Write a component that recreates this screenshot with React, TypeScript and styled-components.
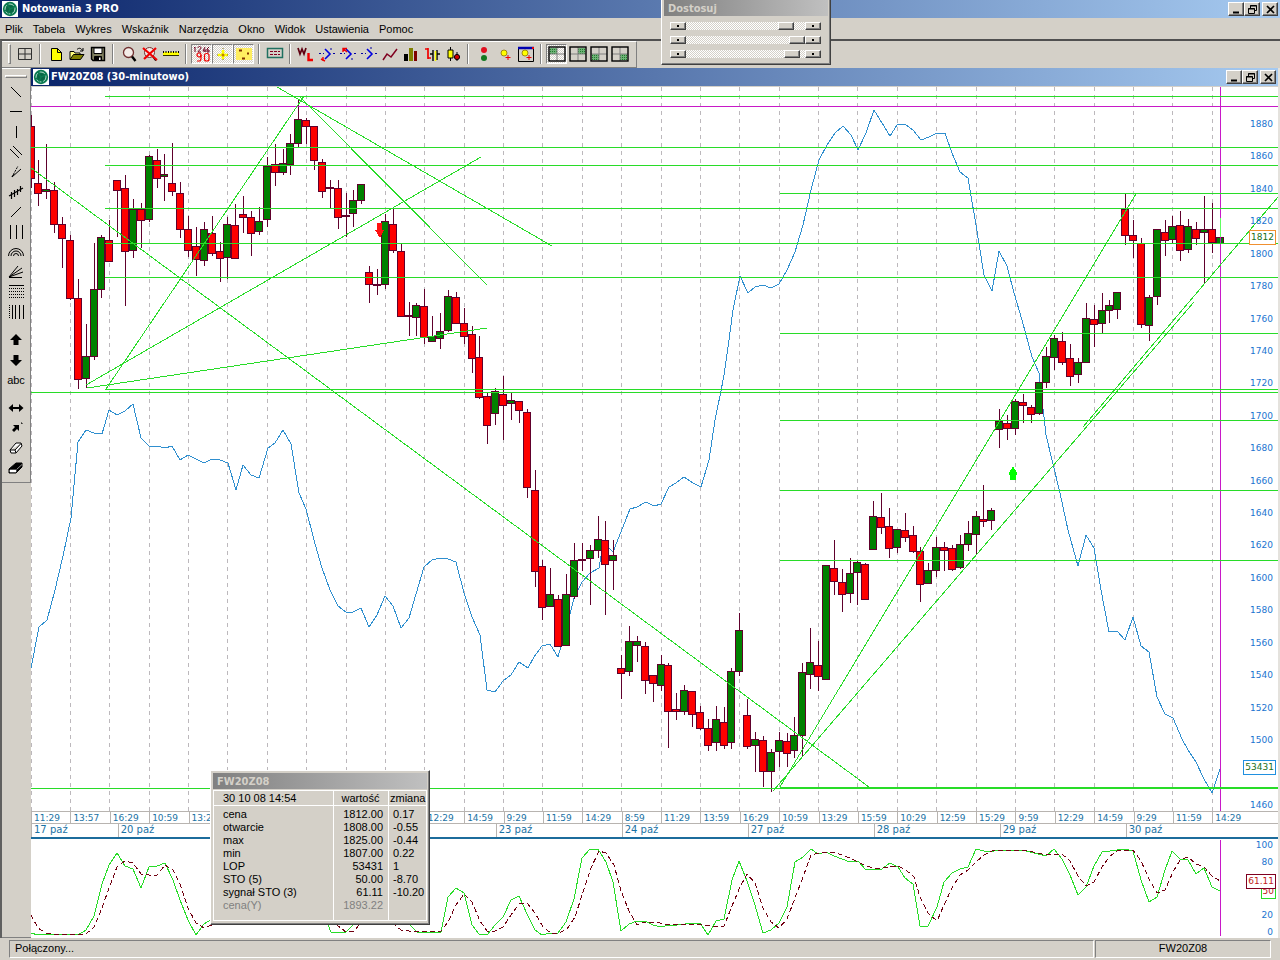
import React from "react";
import styled, { createGlobalStyle, css } from "styled-components";

const face = "#d4d0c8";
const shade = "#808080";
const uiFont = '"Liberation Sans", Arial, sans-serif';
const titleFont = '"DejaVu Sans Condensed", "DejaVu Sans", sans-serif';
const axisFont = '"DejaVu Sans", Verdana, sans-serif';

const GlobalStyle = createGlobalStyle`
  * { box-sizing: border-box; }
  body { margin: 0; background: ${face}; }
`;

const raised = css`
  border: 1px solid;
  border-color: #ffffff #404040 #404040 #ffffff;
  box-shadow: inset -1px -1px 0 ${shade};
`;

const checker = css`
  background: repeating-conic-gradient(#ffffff 0 25%, ${face} 0 50%) 0 0 / 2px 2px;
`;

/* ---------- frame ---------- */

const AppFrame = styled.div`
  height: 100vh;
  min-height: 600px;
  display: flex;
  flex-direction: column;
  background: ${face};
  color: #000;
  font: 11px/13px ${uiFont};
  position: relative;
  overflow: hidden;
`;

const TitleBar = styled.header<{ $inner?: boolean }>`
  flex: none;
  height: ${(p) => (p.$inner ? 19 : 18)}px;
  display: flex;
  align-items: center;
  gap: ${(p) => (p.$inner ? 2 : 4)}px;
  padding: 0 2px;
  border-bottom: ${(p) => (p.$inner ? 1 : 0)}px solid ${face};
  background: linear-gradient(90deg, #0a246a, #a6caf0) border-box;
`;

const TitleText = styled.h1`
  margin: 0;
  flex: 1;
  color: #fff;
  font: bold 11px/16px ${titleFont};
  white-space: nowrap;
`;

const CaptionButtons = styled.div`
  display: flex;
`;

const CaptionButton = styled.button<{ $apart?: boolean }>`
  width: 16px;
  height: 14px;
  padding: 0;
  display: grid;
  place-items: center;
  background: ${face};
  margin-left: ${(p) => (p.$apart ? 2 : 0)}px;
  ${raised}
`;

const MenuBar = styled.nav`
  flex: none;
  height: 21px;
  display: flex;
  align-items: center;
`;

const MenuItem = styled.button`
  border: 0;
  background: none;
  padding: 0 5px;
  height: 20px;
  font: 11px/20px ${uiFont};
  color: #000;
`;

const Workspace = styled.main`
  flex: 1;
  min-height: 0;
  display: flex;
  flex-direction: column;
  border-top: 2px solid #505050;
  border-left: 2px solid #606060;
`;

const ToolStrip = styled.div`
  flex: none;
  align-self: flex-start;
  height: 27px;
  display: flex;
  align-items: center;
  padding: 0 6px 2px;
  border-top: 1px solid #fff;
  border-right: 1px solid ${shade};
  border-bottom: 1px solid ${shade};
`;

const Grip = styled.span<{ $flat?: boolean }>`
  width: ${(p) => (p.$flat ? 22 : 3)}px;
  height: ${(p) => (p.$flat ? 3 : 20)}px;
  border: 1px solid;
  border-color: #fff ${shade} ${shade} #fff;
  margin: ${(p) => (p.$flat ? "6px 0 4px" : "0 3px 0 0")};
`;

const Divider = styled.span`
  width: 2px;
  height: 20px;
  margin: 0 4px;
  border-left: 1px solid ${shade};
  border-right: 1px solid #fff;
`;

const ToolButton = styled.button<{ $pressed?: boolean }>`
  width: 21px;
  height: 20px;
  padding: 0;
  display: grid;
  place-items: center;
  border: 1px solid transparent;
  background: none;
  ${(p) =>
    p.$pressed &&
    css`
      ${checker}
      border-color: ${shade} #fff #fff ${shade};
    `}
`;

const Body = styled.div`
  flex: 1;
  min-height: 0;
  display: flex;
`;

const SideColumn = styled.aside`
  flex: none;
  width: 29px;
  border-bottom: 1px solid ${shade};
`;

const SideStrip = styled.div`
  display: flex;
  flex-direction: column;
  align-items: center;
  padding-bottom: 4px;
  border-top: 1px solid #fff;
  border-right: 1px solid ${shade};
  border-bottom: 1px solid ${shade};
`;

const SideGap = styled.span`
  height: 8px;
`;

const SideButton = styled.button`
  width: 24px;
  height: 20px;
  padding: 0;
  border: 0;
  background: none;
  display: grid;
  place-items: center;
  font: 11px/16px ${uiFont};
  color: #000;
`;

const ChartWindow = styled.section`
  flex: 1;
  min-width: 0;
  display: flex;
  flex-direction: column;
  background: #fff;
  border-right: 2px solid #e4e2dd;
`;

/* ---------- chart ---------- */

const PricePane = styled.div`
  position: relative;
  flex: 724 1 0;
  min-height: 0;
`;

const StochPane = styled.div`
  position: relative;
  flex: 99 1 0;
  min-height: 0;
`;

const Plot = styled.svg`
  display: block;
  width: 100%;
  height: 100%;
  shape-rendering: crispEdges;
`;

const Scale = styled.ol<{ $top: number }>`
  position: absolute;
  top: ${(p) => p.$top}px;
  bottom: 0;
  right: 5px;
  margin: 0;
  padding: 0;
  list-style: none;
  display: flex;
  flex-direction: column;
  justify-content: space-between;
  text-align: right;
  font: 9px/12px ${axisFont};
  color: #1a74d0;
`;

const ScaleMark = styled.li`
  height: 12px;
`;

const Tag = styled.output<{ $top: string; $edge: string; $ink: string }>`
  position: absolute;
  right: 2px;
  top: ${(p) => p.$top};
  height: 15px;
  padding: 0 1px;
  border: 1px solid ${(p) => p.$edge};
  background: #fff;
  color: ${(p) => p.$ink};
  font: 9px/13px ${axisFont};
`;

const AxisRow = styled.ol<{ $dates?: boolean }>`
  flex: none;
  height: ${(p) => (p.$dates ? 14 : 12)}px;
  margin: 0;
  padding: 0;
  list-style: none;
  display: flex;
  overflow: hidden;
  border-top: 1px solid #b8b4b0;
  font: ${(p) => (p.$dates ? 10 : 9)}px/12px ${axisFont};
  color: #1a72a4;
`;

const AxisCell = styled.li<{ $bars: number }>`
  flex: none;
  width: calc(100% * ${(p) => p.$bars} * 63 / 9976);
  padding-left: 2px;
  border-left: 1px solid #b8b4b0;
  white-space: nowrap;
`;

const PaneRule = styled.hr`
  flex: none;
  width: 100%;
  height: 2px;
  margin: 0;
  border: 0;
  background: #1c6c9c;
`;

/* ---------- floating windows ---------- */

const Palette = styled.section`
  position: absolute;
  background: ${face};
  ${raised}
`;

const SliderPalette = styled(Palette)`
  left: 661px;
  top: -3px;
  width: 170px;
  padding: 2px 2px 6px;
`;

const DataPalette = styled(Palette)`
  left: 210px;
  bottom: 35px;
  width: 220px;
  padding: 2px 2px 3px;
`;

const PaletteTitle = styled.h2`
  margin: 0;
  height: 16px;
  padding-left: 4px;
  font: bold 11px/18px ${titleFont};
  color: ${face};
  background: linear-gradient(90deg, #808080, #c0c0c0);
`;

const SliderRow = styled.div`
  display: flex;
  height: 8px;
  margin: 6px 7px 0 6px;
`;

const StepButton = styled.button`
  width: 16px;
  height: 8px;
  padding: 0;
  background: radial-gradient(circle, #000 0 1px, ${face} 1px);
  ${raised}
`;

const Slider = styled.input`
  flex: 1;
  min-width: 0;
  height: 8px;
  margin: 0;
  appearance: none;
  ${checker}
  &::-webkit-slider-thumb {
    appearance: none;
    width: 16px;
    height: 8px;
    background: ${face};
    ${raised}
  }
`;

const DataTable = styled.table`
  width: 100%;
  margin-top: 1px;
  table-layout: fixed;
  border-collapse: separate;
  border-spacing: 0;
  border: 1px solid #fff;
  font: 11px/13px ${uiFont};
`;

const HeadCell = styled.th<{ $width?: number }>`
  width: ${(p) => (p.$width ? `${p.$width}px` : "auto")};
  height: 15px;
  padding: 0 2px 0 1px;
  font-weight: normal;
  text-align: center;
  white-space: nowrap;
  border-bottom: 1px solid #fff;
  border-left: 1px solid #fff;
  &:first-child {
    border-left: 0;
    padding-left: 9px;
    text-align: left;
  }
`;

const NameCell = styled.th`
  height: 13px;
  padding: 0 0 0 9px;
  font-weight: normal;
  text-align: left;
`;

const ValueCell = styled.td`
  padding: 0 5px 0 0;
  text-align: right;
  border-left: 1px solid #fff;
`;

const ChangeCell = styled.td`
  padding: 0 0 0 4px;
  overflow: hidden;
  white-space: nowrap;
  border-left: 1px solid #fff;
`;

const DataRow = styled.tr<{ $muted?: boolean }>`
  color: ${(p) => (p.$muted ? shade : "#000")};
`;

const SpacerRow = styled.tr<{ $height: number }>`
  height: ${(p) => p.$height}px;
`;

/* ---------- status bar ---------- */

const StatusBar = styled.footer`
  flex: none;
  height: 22px;
  display: flex;
  gap: 1px;
  padding: 2px 9px;
`;

const StatusPane = styled.div<{ $fixed?: boolean }>`
  flex: ${(p) => (p.$fixed ? "0 0 176px" : "1")};
  padding-left: ${(p) => (p.$fixed ? 0 : 5)}px;
  text-align: ${(p) => (p.$fixed ? "center" : "left")};
  line-height: 15px;
  border: 1px solid;
  border-color: ${shade} #fff #fff ${shade};
`;

/* ---------- icons ---------- */

const Icon = ({ children, w = 18, h = 16 }: { children: React.ReactNode; w?: number; h?: number }) => (
  <svg width={w} height={h} viewBox={`0 0 ${w} ${h}`} fill="none" stroke="#000" aria-hidden="true">
    {children}
  </svg>
);

const Logo = () => (
  <svg width="16" height="16" viewBox="0 0 16 16" aria-hidden="true">
    <rect width="16" height="16" fill="#fff" />
    <circle cx="8" cy="8" r="7.2" fill="#0b7a50" />
    <circle cx="8" cy="8" r="5" fill="none" stroke="#d8ece2" strokeWidth=".8" strokeDasharray="5.4 1.8" />
    <circle cx="8" cy="8" r="3.8" fill="#0a6644" />
    <path d="M8 8L5 3.6M8 8L12.5 6M8 8L6 12.6" stroke="#0b7a50" strokeWidth="1.4" />
  </svg>
);

const captionIcons: Record<string, React.ReactNode> = {
  Minimalizuj: <path d="M2 8.5H8" strokeWidth="2" />,
  Przywróć: <path d="M3.5 4V1.5H9.5V6.5H8M3 2H10M1.5 4.5H7.5V9.5H1.5ZM1 5H8" />,
  Zamknij: <path d="M2 2L9 9M9 2L2 9" strokeWidth="1.7" />,
};

const Caption = () => (
  <CaptionButtons>
    {Object.keys(captionIcons).map((name) => (
      <CaptionButton key={name} type="button" aria-label={name} $apart={name === "Zamknij"}>
        <Icon w={11} h={11}>{captionIcons[name]}</Icon>
      </CaptionButton>
    ))}
  </CaptionButtons>
);

const chevron = <path d="M7 3L12 8L7 13" stroke="#0000e0" strokeWidth="1.6" />;
const bulb = (x: number, y: number) => (
  <>
    <circle cx={x} cy={y} r="3" fill="#ffff00" stroke="#806000" strokeWidth=".7" />
    <path d={`M${x + 1.5} ${y + 4.5}h5M${x + 4} ${y + 2}v5`} stroke="#f00000" />
  </>
);
const quadrant = (x: number, y: number) => (
  <Icon>
    <path d={`M${x} ${y}h7v6h-7z`} fill="#6fb277" stroke="none" />
    <path d={`M${x} ${y + 1.5}h7M${x} ${y + 3.5}h7M${x} ${y + 5.5}h7`} stroke="#1f7a2c" strokeDasharray="1 1" />
    <path d="M9 1V15M1 8H17" stroke="#808080" />
    <rect x="1" y="1" width="16" height="14" strokeWidth="1.4" />
  </Icon>
);

type Tool = { name: string; icon: React.ReactNode; pressed?: boolean };

const toolGroups: Tool[][] = [
  [{ name: "Siatka", icon: <Icon><path d="M2.5 2.5H15.5V13.5H2.5ZM9 2V14M2 8H16" stroke="#303030" /></Icon> }],
  [
    { name: "Nowy", icon: <Icon><path d="M4.5 2.5H10.5L14.5 6.5V14.5H4.5Z" fill="#ffff00" /><path d="M10.5 2.5V6.5H14.5" /></Icon> },
    { name: "Otwórz", icon: <Icon><path d="M2 13V5.5H6L7 7H12V9" fill="#ffff80" /><path d="M2 13.5L5.5 8.5H16L12.5 13.5Z" fill="#808000" /><path d="M9 3.5C11 1.5 13 2 14.5 4.5M15 2V5H12" /></Icon> },
    { name: "Zapisz", icon: <Icon><path d="M2.5 1.5H15.5V14.5H4L2.5 13Z" fill="#808060" strokeWidth="1.4" /><path d="M5 2H13V7.5H5Z" fill="#fff" /><path d="M5.5 10.5H12.5V14.5H5.5Z" fill="#000" /><path d="M10 11.5H11.5V14H10Z" fill="#fff" stroke="none" /></Icon> },
  ],
  [
    { name: "Powiększ", icon: <Icon><circle cx="8.5" cy="6.5" r="5" fill="#f4ece8" stroke="#703030" strokeWidth="1.3" /><path d="M12 10.5L15.5 15" strokeWidth="2.4" /></Icon> },
    { name: "Anuluj powiększenie", icon: <Icon><circle cx="8.5" cy="6.5" r="5" fill="#f4ece8" stroke="#703030" /><path d="M12 10.5L15 14.5" strokeWidth="2" /><path d="M2 2L16 14M15 2L3 13" stroke="#f00000" strokeWidth="2.2" /></Icon> },
    { name: "Linijka", icon: <Icon><path d="M1 7.5H17" stroke="#ffff00" strokeWidth="3" /><path d="M1 9.5H17" stroke="#303000" /><path d="M1 6H17" strokeDasharray="1 1.5" strokeWidth="2" /></Icon> },
  ],
  [
    { name: "Wartości", pressed: true, icon: <Icon><path d="M2 1V6M1 2L2 1M5 2C5 0 8 0 8 2C8 3 5 5 5 6H8M12 1L10 5H13M12 3V6M16 1L14 3V6H16V4H14" stroke="#700020" /><circle cx="6" cy="9" r="2" stroke="#f00000" strokeWidth="1.2" /><path d="M8 9V13L7 15H4" stroke="#f00000" strokeWidth="1.2" /><rect x="11.5" y="7.5" width="4.5" height="7.5" rx="2" stroke="#f00000" strokeWidth="1.2" /></Icon> },
    { name: "Krzyż", pressed: true, icon: <Icon><path d="M9 4V13M4 9H14" stroke="#ffff00" strokeWidth="2.6" /><path d="M9 2V4M9 13V15M3 9H5M13 9H15" stroke="#807000" strokeDasharray="1 1" /><circle cx="9" cy="9" r="1.5" fill="#c08000" stroke="none" /></Icon> },
    { name: "Punkty", pressed: true, icon: <Icon><path d="M1 2H17V14H1Z" fill="#ffee60" stroke="none" /><path d="M4 4.5H7M12 7.5H14M7 12.5H10" stroke="#803000" strokeWidth="2.2" /></Icon> },
  ],
  [{ name: "Legenda", icon: <Icon><path d="M1.5 2.5H16.5V11.5H1.5Z" stroke="#207060" strokeWidth="1.5" /><path d="M4 5.5H14M4 8.5H14" stroke="#800020" strokeDasharray="3 1" /></Icon> }],
  [
    { name: "Wskaźnik WL", icon: <Icon><path d="M1 2L3 8L5 3L7 8L9 2" stroke="#600010" strokeWidth="1.7" /><path d="M11.5 7V14H16" stroke="#f00000" strokeWidth="2.4" /></Icon> },
    { name: "Sygnał", icon: <Icon><path d="M1 7.5H6M13 2V4M15 7.5H18" stroke="#0000a0" strokeDasharray="2 2" />{chevron}<path d="M3 13L7 15M5 11V15" stroke="#f00000" strokeWidth="1.4" /></Icon> },
    { name: "Sygnał wstecz", icon: <Icon><path d="M1 7.5H6M15 7.5H18M13 12V15" stroke="#0000a0" strokeDasharray="2 2" />{chevron}<path d="M4 6V2.5H8M4 2.5L8 6" stroke="#f00000" strokeWidth="1.4" /></Icon> },
    { name: "Sygnał dalej", icon: <Icon><path d="M1 7.5H6M15 7.5H18M11 1V3" stroke="#0000a0" strokeDasharray="2 2" />{chevron}</Icon> },
    { name: "Wykres liniowy", icon: <Icon><path d="M2 14L6 8L10 11L16 3" stroke="#800020" strokeWidth="1.5" /></Icon> },
    { name: "Wykres słupkowy", icon: <Icon><path d="M2 8H6V15H2Z" fill="#000" stroke="none" /><path d="M7 2H11V15H7Z" fill="#808000" stroke="none" /><path d="M12 5H15V15H12Z" fill="#800000" stroke="none" /></Icon> },
    { name: "Wykres OHLC", icon: <Icon><path d="M5 2V13M2 3H5M5 12H8" stroke="#f00000" strokeWidth="1.7" /><path d="M10 4V15M10 8H7M14 4V14M14 8H17" strokeWidth="1.4" /><path d="M12.5 5V15" stroke="#ffff00" strokeWidth="1.5" /></Icon> },
    { name: "Wykres świecowy", icon: <Icon><path d="M6.5 1V15" /><path d="M4 4H9V12H4Z" fill="#ffff00" /><path d="M13 6V15" /><circle cx="13" cy="11" r="2.6" fill="#d00000" /></Icon> },
  ],
  [
    { name: "Światła", icon: <Icon><circle cx="9" cy="4" r="3" fill="#e01020" stroke="none" /><circle cx="9" cy="12" r="3" fill="#107820" stroke="none" /></Icon> },
    { name: "Nowy alarm", icon: <Icon>{bulb(8, 7)}</Icon> },
    { name: "Lista alarmów", icon: <Icon><path d="M1.5 2V15.5H16.5V2" /><path d="M1 2H17" stroke="#0000b0" strokeWidth="2.5" /><path d="M15 2H17" stroke="#f00000" strokeWidth="2" />{bulb(8, 7)}</Icon> },
  ],
  [
    { name: "Lewy górny", pressed: true, icon: quadrant(2, 2) },
    { name: "Prawy górny", icon: quadrant(9, 2) },
    { name: "Lewy dolny", icon: quadrant(2, 8) },
    { name: "Prawy dolny", icon: quadrant(9, 8) },
  ],
];

const sideGroups: Tool[][] = [
  [
    { name: "Linia", icon: <Icon><path d="M4 3L14 13" /></Icon> },
    { name: "Linia pozioma", icon: <Icon><path d="M3 7.5H15" /></Icon> },
    { name: "Linia pionowa", icon: <Icon><path d="M9.5 2V14" /></Icon> },
    { name: "Kanał", icon: <Icon><path d="M3 5L12 14M6 2L15 11" /></Icon> },
    { name: "Wachlarz", icon: <Icon><path d="M5 13L14 5M5 13L7 10" /><path d="M5 13L11 2" strokeDasharray="2 1" /></Icon> },
    { name: "Regresja", icon: <Icon><path d="M2 12L16 4M4.5 8V15M7.500 6V13M10.5 5V11M13.5 2V8" strokeWidth="1.2" /></Icon> },
    { name: "Odcinek", icon: <Icon><path d="M4 13L14 3" /></Icon> },
    { name: "Cykle", icon: <Icon><path d="M3.5 1V15M9.5 1V15M15.5 1V15" /></Icon> },
    { name: "Łuki", icon: <Icon><path d="M1.5 12A7.5 7.5 0 0 1 16.5 12M4 12A5 5 0 0 1 14 12M6.5 12A2.5 2.5 0 0 1 11.5 12" /></Icon> },
    { name: "Promienie", icon: <Icon><path d="M2 13L11 2M2 13L15 4M2 13L16 8M2 13.5H15" /></Icon> },
    { name: "Poziomy", icon: <Icon><path d="M2 1.5H17" /><path d="M2 4.5H17M2 7.5H17M2 10.5H17M2 13.5H17" strokeDasharray="1 1" /></Icon> },
    { name: "Strefy", icon: <Icon><path d="M2.5 1V15" strokeDasharray="1 1" /><path d="M5.5 1V15M8.5 1V15M12.5 1V15M16.5 1V15" /></Icon> },
  ],
  [
    { name: "Strzałka w górę", icon: <Icon><path d="M9 2L15 8H11.5V13H6.5V8H3Z" fill="#000" stroke="none" /></Icon> },
    { name: "Strzałka w dół", icon: <Icon><path d="M9 14L15 8H11.5V3H6.5V8H3Z" fill="#000" stroke="none" /></Icon> },
    { name: "Tekst", icon: "abc" },
  ],
  [
    { name: "Przesuń", icon: <Icon><path d="M1.5 8L6 4V12ZM16.5 8L12 4V12Z" fill="#000" stroke="none" /><path d="M4 8H14" strokeWidth="2" /></Icon> },
    { name: "Skaluj", icon: <Icon><path d="M6 5H12V11L10 9L7 12L5 10L8 7Z" fill="#000" stroke="none" /><path d="M14 3H15V4" /></Icon> },
    { name: "Gumka", icon: <Icon><path d="M3 10L9 3H14L15 6L9 13H4ZM3 10H8L14 3.5M8 10L9 13" fill="#fff" /></Icon> },
    { name: "Usuń wszystko", icon: <Icon><path d="M2 9L9 3H15V7L9 13H2Z" fill="#000" /><path d="M3 10H9V12H3ZM9.5 9.5L15 4.5" fill="#fff" stroke="#fff" strokeWidth=".6" /></Icon> },
  ],
];

/* ---------- chart data ---------- */

const X0 = 31;
const STEP = 7.875;
const barX = (i: number) => Math.floor(X0 + i * STEP);

// body top, body bottom, high, low; the sign of the first value gives the direction (negative = falling)
const candles: number[][] = [
  [-126,179,115,188],[-183,194,160,206],[189,192,144,199],[-190,225,182,233],[-224,239,217,268],[-240,299,235,300],[-298,380,279,389],[356,379,324,388],
  [289,357,243,360],[237,290,235,298],[-240,262,220,262],[-180,191,180,237],[-188,252,175,306],[209,251,199,258],[-209,221,203,248],[156,220,155,222],
  [-160,179,149,188],[174,177,154,201],[-183,192,143,196],[-193,230,182,238],[-229,251,216,257],[-246,260,227,276],[229,261,222,266],[-233,254,216,256],
  [-251,259,242,282],[224,258,217,279],[-225,259,204,259],[-214,218,196,233],[-217,234,211,256],[221,232,207,235],[166,220,157,227],[-164,173,144,186],
  [163,173,149,175],[143,165,134,175],[119,144,99,147],[-120,127,118,144],[-126,161,126,170],[-162,192,159,198],[187,188,180,208],[-188,218,180,229],
  [-215,217,193,237],[200,214,190,227],[184,201,184,204],[-272,285,266,303],[-284,286,269,295],[221,285,214,289],[-224,251,208,253],[-251,317,244,317],
  [315,316,302,336],[305,318,303,336],[-306,338,289,344],[336,342,316,342],[331,339,313,349],[296,331,290,332],[-297,324,292,324],[-323,337,308,344],
  [-334,359,326,373],[-357,398,336,399],[-396,426,393,444],[391,414,388,425],[-394,406,376,440],[400,404,393,420],[-401,411,401,423],[-412,488,409,498],
  [-490,572,470,587],[-566,608,560,620],[594,607,568,607],[-599,647,595,647],[594,646,574,646],[560,597,543,599],[-559,561,543,571],[550,559,545,605],
  [539,551,516,558],[-540,565,521,615],[555,561,540,590],[-668,674,655,699],[641,672,626,676],[641,646,636,662],[-646,681,642,694],[-675,684,675,702],
  [664,686,655,691],[-665,712,663,748],[-709,712,693,720],[690,712,685,715],[-691,715,691,727],[-712,729,706,730],[-728,746,719,751],[719,743,706,751],
  [-722,746,707,749],[671,743,668,749],[630,672,613,676],[-715,747,699,749],[739,746,732,772],[-740,772,736,787],[752,772,749,792],[740,752,732,767],
  [-741,754,733,767],[735,751,717,758],[672,736,663,756],[662,675,628,689],[-665,677,641,691],[565,680,565,680],[-568,582,540,595],[-582,595,569,612],
  [573,594,558,603],[562,573,560,605],[-564,600,563,600],[516,550,501,550],[-517,528,493,534],[-526,549,508,558],[529,548,529,553],[-530,538,513,542],
  [-535,552,526,553],[-551,585,547,602],[570,584,563,584],[547,571,537,577],[-547,551,542,571],[-548,570,545,571],[544,568,535,569],[533,545,521,551],
  [516,535,511,555],[-519,522,485,527],[510,521,508,530],[421,430,409,448],[-423,429,415,440],[401,429,399,435],[-402,406,394,423],[-407,415,405,423],
  [382,414,382,415],[356,383,347,388],[338,358,335,370],[-341,363,332,365],[-358,377,344,386],[362,375,358,383],[318,363,303,363],[-319,325,305,347],
  [310,324,293,333],[305,311,300,323],[292,310,292,319],[-209,236,194,245],[-235,241,220,258],[-243,325,238,328],[297,326,295,341],[229,297,229,305],
  [-232,241,220,256],[226,240,216,243],[-225,251,211,261],[226,250,219,253],[-229,239,222,245],[229,233,196,283],[-229,243,203,253],[237,244,237,244],
];

const openInterest =
  "31,668 39,627 47,620 55,590 63,556 71,518 78,442 86,430 94,433 102,434 109,410 117,415 125,411 133,404 141,438 149,446 157,446 165,448 172,446 180,460 188,455 196,459 204,463 212,459 220,460 228,463 236,490 243,465 251,475 259,478 268,448 275,443 283,430 291,444 299,493 306,509 314,540 322,568 330,590 338,606 346,612 353,612 361,608 369,627 377,615 385,596 393,606 401,628 409,618 416,594 424,567 432,560 440,558 448,559 456,562 464,593 472,617 480,635 487,690 495,692 503,681 511,675 519,662 528,668 534,657 542,646 550,644 558,657 570,614 574,598 579,588 582,582 590,573 599,568 601,556 606,545 613,552 630,509 637,507 646,502 654,506 661,504 669,487 676,483 684,477 693,483 701,487 709,460 715,420 721,391 724,375 729,340 733,310 740,276 748,293 755,287 763,285 771,288 779,284 787,270 795,252 803,225 811,190 819,160 827,145 835,133 843,126 851,135 858,150 866,133 874,110 882,123 890,136 897,125 905,124 913,130 921,140 929,137 937,133 945,133 952,153 960,172 968,178 976,225 984,275 992,291 999,251 1007,266 1014,293 1022,320 1032,357 1039,373 1046,435 1052,460 1060,493 1068,530 1078,566 1086,535 1094,548 1101,590 1109,632 1117,631 1125,640 1133,617 1141,646 1149,652 1157,697 1165,714 1173,718 1182,739 1188,750 1196,762 1204,779 1212,793 1220,769";

const stochastic =
  "31,933 38,935 46,934 78,935 86,930 94,916 102,884 109,865 117,853 125,866 133,869 141,888 149,867 157,866 165,863 173,880 180,900 188,920 196,935 204,924 212,919 240,890 300,880 328,925 331,932 346,932 354,924 375,880 400,890 410,925 417,932 433,932 441,932 448,897 456,888 464,893 472,925 479,934 487,935 495,925 503,917 511,900 519,896 527,914 535,930 542,935 550,933 558,933 566,922 574,899 582,858 590,849 598,849 606,862 613,882 621,931 629,924 637,921 645,921 653,925 661,927 669,925 677,925 685,924 700,923 708,935 716,921 724,919 732,880 739,861 747,881 755,905 763,933 771,930 779,923 787,907 795,862 803,857 811,849 818,854 826,852 834,856 842,859 850,862 858,861 866,870 874,869 882,869 890,863 898,867 905,878 913,884 920,926 928,926 937,907 944,882 952,873 960,869 968,867 976,849 984,851 994,851 1022,850 1046,856 1054,849 1062,859 1070,875 1078,895 1086,887 1094,866 1102,852 1110,851 1117,850 1125,849 1133,851 1141,880 1149,902 1157,897 1165,870 1172,851 1180,859 1188,860 1196,874 1204,868 1212,887 1220,891";

const stochasticSignal =
  "31,915 38,928 46,933 54,934 86,934 94,927 102,908 109,888 117,867 125,861 133,863 141,874 149,875 157,875 165,865 173,870 180,884 188,908 196,923 204,928 212,925 250,890 310,890 338,926 346,932 354,931 360,924 380,890 395,925 401,930 409,931 433,931 441,931 448,922 456,905 464,894 472,902 480,921 487,931 495,931 503,927 511,915 519,904 527,903 535,913 543,927 551,933 559,933 567,929 575,917 583,892 591,868 599,851 606,853 614,865 621,891 629,911 637,925 645,922 655,922 669,925 700,924 710,926 724,926 732,906 740,887 747,874 755,883 763,908 771,922 779,928 787,919 795,898 803,877 811,855 819,853 834,852 842,855 850,858 858,862 866,866 874,868 882,868 898,866 906,870 914,877 920,897 928,913 937,921 944,905 952,888 960,875 968,870 976,862 984,855 992,851 1024,850 1046,855 1062,854 1070,861 1078,876 1086,886 1094,882 1102,867 1110,856 1117,851 1133,850 1141,861 1149,879 1157,893 1165,890 1173,872 1180,860 1188,857 1196,864 1204,867 1212,876 1220,881";

const levels: [number, number][] = [
  [96, 105], [147, 31], [165, 105], [193, 780], [208, 105], [243, 105], [277, 105], [333, 780],
  [389, 105], [392, 31], [420, 780], [490, 780], [560, 780], [788, 31], [787, 780],
];

const trendLines: [number, number, number, number][] = [
  [31, 168, 869, 787], [106, 389, 304, 96], [86, 385, 481, 157], [87, 388, 487, 328], [277, 87, 552, 246],
  [300, 97, 487, 285], [780, 787, 1136, 194], [773, 791, 1194, 302], [1083, 427, 1278, 197],
];

const times = [
  "11:29", "13:57", "16:29", "10:59", "13:29", "", "", "", "", "", "12:29", "14:59", "9:29", "11:59", "14:29", "8:59",
  "11:29", "13:59", "16:29", "10:59", "13:29", "15:59", "10:29", "12:59", "15:29", "9:59", "12:29", "14:59", "9:29", "11:59", "14:29",
];
const dates = ["17 paź", "20 paź", "", "", "23 paź", "24 paź", "27 paź", "28 paź", "29 paź", "30 paź"];

// the mark at 1480 stays blank: the open-interest tag sits on it
const prices = Array.from({ length: 22 }, (_, i) => 1880 - i * 20);
const stochMarks = ["100", "80", "", "", "20", "0"];

const menu = ["Plik", "Tabela", "Wykres", "Wskaźnik", "Narzędzia", "Okno", "Widok", "Ustawienia", "Pomoc"];

const readings = [
  ["cena", "1812.00", "0.17"],
  ["otwarcie", "1808.00", "-0.55"],
  ["max", "1825.00", "-0.44"],
  ["min", "1807.00", "0.22"],
  ["LOP", "53431", "1"],
  ["STO (5)", "50.00", "-8.70"],
  ["sygnał STO (3)", "61.11", "-10.20"],
  ["cena(Y)", "1893.22", ""],
];

/* ---------- parts ---------- */

const PricePlot = () => (
  <Plot viewBox="31 87 1247 724" preserveAspectRatio="none" role="img" aria-label="FW20Z08">
    {times.map((_, i) => (
      <path key={i} d={`M${barX(i * 5) + 0.5} 87V811`} stroke="#bcb8bc" strokeDasharray="4 4" />
    ))}
    <polyline points={openInterest} fill="none" stroke="#2f8fcf" />
    {candles.map(([top, bottom, high, low], i) => {
      const x = barX(i);
      const y = Math.abs(top);
      return (
        <g key={i} stroke="#60002c">
          <path d={`M${x + 0.5} ${high}V${low}`} />
          <rect
            x={x - 3.5}
            y={y + 0.5}
            width="7"
            height={Math.max(bottom - y - 1, 0.5)}
            fill={top < 0 ? "#fe0000" : "#008000"}
          />
        </g>
      );
    })}
    <path d="M31 106.5H1278M1220.5 87V811" stroke="#c818c8" />
    <path d="M1220.5 218V237" stroke="#60ff60" />
    {levels.map(([y, x], i) => (
      <path key={i} d={`M${x} ${y + 0.5}H1278`} stroke="#28dc28" />
    ))}
    {trendLines.map(([x1, y1, x2, y2], i) => (
      <line key={i} x1={x1} y1={y1} x2={x2} y2={y2} stroke="#28dc28" />
    ))}
    <path d="M377 223H382V230H384L380 238L375 230H377Z" fill="#fe1010" />
    <path d="M1013 466L1017 473V475H1016V480H1010V475H1009V473Z" fill="#00ff00" />
  </Plot>
);

const StochPlot = () => (
  <Plot viewBox="31 839 1247 99" preserveAspectRatio="none" role="img" aria-label="STO (5)">
    <polyline points={stochastic} fill="none" stroke="#28dc28" />
    <polyline points={stochasticSignal} fill="none" stroke="#700010" strokeDasharray="5 3" />
    <path d="M1220.5 840V936" stroke="#c818c8" />
  </Plot>
);

const Sliders = () => (
  <SliderPalette>
    <PaletteTitle>Dostosuj</PaletteTitle>
    {[89, 100, 95].map((value, i) => (
      <SliderRow key={i}>
        <StepButton type="button" aria-label="Mniej" />
        <Slider type="range" min={0} max={100} defaultValue={value} aria-label={`Dostosuj ${i + 1}`} />
        <StepButton type="button" aria-label="Więcej" />
      </SliderRow>
    ))}
  </SliderPalette>
);

const Spacer = ({ height }: { height: number }) => (
  <SpacerRow $height={height} aria-hidden="true">
    <td />
    <ValueCell />
    <ChangeCell />
  </SpacerRow>
);

const DataWindow = () => (
  <DataPalette>
    <PaletteTitle>FW20Z08</PaletteTitle>
    <DataTable>
      <thead>
        <tr>
          <HeadCell scope="col">30 10 08 14:54</HeadCell>
          <HeadCell scope="col" $width={55}>wartość</HeadCell>
          <HeadCell scope="col" $width={38}>zmiana</HeadCell>
        </tr>
      </thead>
      <tbody>
        <Spacer height={2} />
        {readings.map(([name, value, change]) => (
          <DataRow key={name} $muted={name === "cena(Y)"}>
            <NameCell scope="row">{name}</NameCell>
            <ValueCell>{value}</ValueCell>
            <ChangeCell>{change}</ChangeCell>
          </DataRow>
        ))}
        <Spacer height={8} />
      </tbody>
    </DataTable>
  </DataPalette>
);

export default function App() {
  return (
    <AppFrame>
      <GlobalStyle />
      <TitleBar>
        <Logo />
        <TitleText>Notowania 3 PRO</TitleText>
        <Caption />
      </TitleBar>
      <MenuBar>
        {menu.map((item) => (
          <MenuItem key={item} type="button">{item}</MenuItem>
        ))}
      </MenuBar>
      <Workspace>
        <ToolStrip>
          <Grip />
          {toolGroups.map((group, g) => (
            <React.Fragment key={g}>
              {g > 0 && <Divider />}
              {group.map((tool) => (
                <ToolButton key={tool.name} type="button" aria-label={tool.name} $pressed={tool.pressed}>
                  {tool.icon}
                </ToolButton>
              ))}
            </React.Fragment>
          ))}
        </ToolStrip>
        <Body>
          <SideColumn>
            <SideStrip>
              <Grip $flat />
              {sideGroups.map((group, g) => (
                <React.Fragment key={g}>
                  {g > 0 && <SideGap />}
                  {group.map((tool) => (
                    <SideButton key={tool.name} type="button" aria-label={tool.name}>{tool.icon}</SideButton>
                  ))}
                </React.Fragment>
              ))}
            </SideStrip>
          </SideColumn>
          <ChartWindow>
            <TitleBar as="div" $inner>
              <Logo />
              <TitleText as="h2">FW20Z08 (30-minutowo)</TitleText>
              <Caption />
            </TitleBar>
            <PricePane>
              <PricePlot />
              <Scale $top={31}>
                {prices.map((p) => (
                  <ScaleMark key={p}>{p === 1480 ? "" : p}</ScaleMark>
                ))}
              </Scale>
              <Tag $top="19.8%" $edge="#f09030" $ink="#207020">1812</Tag>
              <Tag $top="93%" $edge="#2090e0" $ink="#207020">53431</Tag>
            </PricePane>
            <AxisRow>
              {times.map((t, i) => (
                <AxisCell key={i} $bars={5}>{t}</AxisCell>
              ))}
            </AxisRow>
            <AxisRow $dates>
              {dates.map((d, i) => (
                <AxisCell key={i} $bars={i === 0 ? 11 : 16}>{d}</AxisCell>
              ))}
            </AxisRow>
            <PaneRule />
            <StochPane>
              <StochPlot />
              <Scale $top={0}>
                {stochMarks.map((mark, i) => (
                  <ScaleMark key={i}>{mark}</ScaleMark>
                ))}
              </Scale>
              <Tag $top="45%" $edge="#28dc28" $ink="#c02020">50</Tag>
              <Tag $top="35%" $edge="#800020" $ink="#c02020">61.11</Tag>
            </StochPane>
          </ChartWindow>
        </Body>
      </Workspace>
      <StatusBar>
        <StatusPane>Połączony...</StatusPane>
        <StatusPane $fixed>FW20Z08</StatusPane>
      </StatusBar>
      <Sliders />
      <DataWindow />
    </AppFrame>
  );
}
